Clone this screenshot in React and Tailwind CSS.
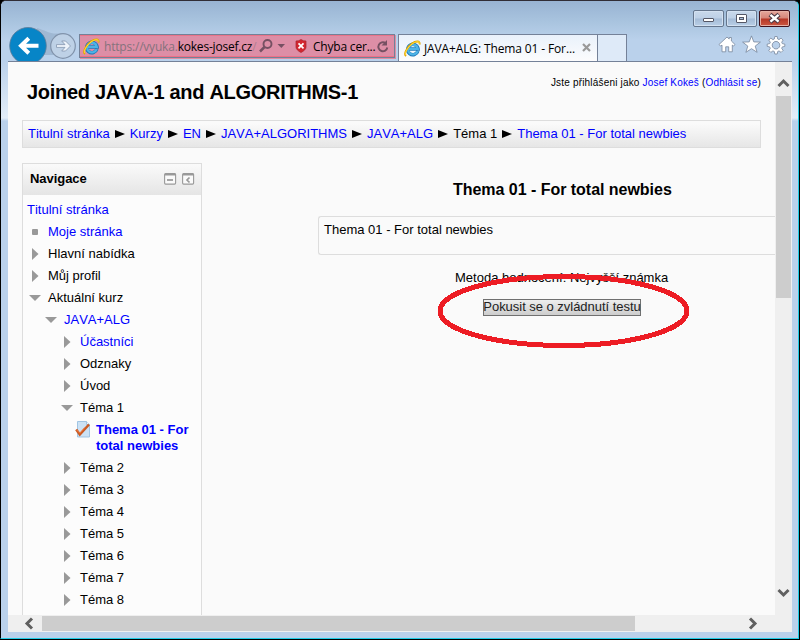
import React from "react";

const UI = "font-['Open_Sans','Noto_Sans',sans-serif]";

function IeLogo() {
  return (
    <svg width="17" height="17" viewBox="0 0 17 17" className="shrink-0">
      <path d="M13.9 11.1A5.2 5.2 0 1 1 14.1 9H5" fill="none" stroke="#1e78b8" strokeWidth="3.5" />
      <path d="M13.6 11.1A4.9 4.9 0 1 1 13.8 8.8H5" fill="none" stroke="#4db3e6" strokeWidth="2.3" />
      <path d="M2.2 15.9C-.8 14.4 2.8 7.5 8 3.6 12 .6 16.3 .6 15.5 4.5" fill="none" stroke="#e5a800" strokeWidth="1.9" />
      <path d="M2 15.2C0 13.5 3.5 7.5 8 4 12 1 15.5 1 15.4 3.5" fill="none" stroke="#ffdc42" strokeWidth="1" />
    </svg>
  );
}

function CaptionButton({ kind }) {
  const close = kind === "close";
  return (
    <div
      className={`flex h-[17px] w-[31px] items-center justify-center rounded-[2px] border ${
        close
          ? "border-[#41101a] bg-[linear-gradient(#e6a79c,#d68478_48%,#b63626_52%,#cb5842)] shadow-[inset_0_0_0_1px_#e6b0a5]"
          : "border-[#65768d] bg-[linear-gradient(#c9d9eb,#bdd0e6_48%,#a4bbd6_52%,#b9cfe7)] shadow-[inset_0_0_0_1px_#d3e1f1]"
      }`}
    >
      <svg width="15" height="13" viewBox="0 0 15 13">
        {kind === "min" && <rect x="2.5" y="6.5" width="10" height="3" rx=".5" fill="#fff" stroke="#545766" />}
        {kind === "max" && (
          <>
            <rect x="2.5" y="2.5" width="10" height="8" rx=".5" fill="#fff" stroke="#545766" />
            <rect x="5.5" y="5.5" width="4" height="2" fill="#a9bfd8" stroke="#545766" />
          </>
        )}
        {close && (
          <>
            <path d="M3 2.500l9 7.500m0-7.500l-9 7.500" stroke="#4d3a45" strokeWidth="4.600" />
            <path d="M3.400 2.900l8.200 6.700m0-6.700l-8.200 6.700" stroke="#fff" strokeWidth="2.500" />
          </>
        )}
      </svg>
    </div>
  );
}

function Chevron({ d, className }) {
  return (
    <svg width="13" height="13" viewBox="0 0 13 13" className={className}>
      <path d={d} fill="none" stroke="#606060" strokeWidth="3" />
    </svg>
  );
}

function AddressBar() {
  return (
    <div className={`${UI} mt-[34px] ml-[3px] flex h-6 w-[316px] shrink-0 items-center border border-[#748198] bg-[#dd8ea6] text-[12px] text-black shadow-[inset_0_1px_#e97489,inset_0_-1px_#ed7086,1px_1px_#dc8ea2]`}>
      <div className="ml-[3px] flex"><IeLogo /></div>
      <div className="mt-px ml-[4px] w-[153px] whitespace-nowrap">
        <span className="tracking-[-0.2px] text-[#85737d]">https://vyuka.</span>
        <span className="tracking-[-0.2px]">kokes-josef.cz</span>
        <span className="text-[#b07f92]">/</span>
      </div>
      <svg width="30" height="16" viewBox="0 0 30 16" className="ml-[2px] shrink-0">
        <circle cx="8.500" cy="6" r="4" fill="none" stroke="#765062" strokeWidth="1.900" />
        <path d="M5.500 9L1 13.500" stroke="#765062" strokeWidth="2.500" />
        <path d="M18.500 6h7.500l-3.700 4z" fill="#765062" />
      </svg>
      <svg width="12" height="14" viewBox="0 0 12 14" className="ml-[6px] shrink-0">
        <path d="M1 2l2.500-.2L6 .5l2.500 1.300L11 2v6c0 2-2 4-5 5.500C3 12 1 10 1 8z" fill="#d32630" stroke="#a8242d" strokeWidth=".7" />
        <path d="M3.500 4.300l5 5m0-5l-5 5" stroke="#fff" strokeWidth="1.700" />
      </svg>
      <span className="mt-px ml-[6px] w-[63px] whitespace-nowrap tracking-[-0.2px]">Chyba cer...</span>
      <svg width="14" height="15" viewBox="0 0 14 15" className="shrink-0">
        <path d="M9.500 4.100A4.500 4.500 0 1 0 11.300 8.500" fill="none" stroke="#765062" strokeWidth="1.900" />
        <path d="M11 1v5.500H5.500z" fill="#765062" />
      </svg>
    </div>
  );
}

function BrowserChrome() {
  return (
    <header className="flex h-[61px] w-full items-start bg-[linear-gradient(#99b4d3_2px,#a9c4df_22px,#bad1eb_40px)]">
      <div className="mt-[27px] ml-[7px] flex h-[34px] w-[68px] shrink-0 overflow-hidden">
        <svg width="68" height="36" viewBox="0 0 68 36" className="shrink-0">
          <path d="M29 1C40 4 42 8 54 6L47 28H28z" fill="#9fb8d3" />
          <circle cx="55" cy="19" r="12.300" fill="#bed1e6" stroke="#8193ab" strokeWidth="1.200" />
          <path d="M48.500 17.600h8.500l-3.300-3.600h3.800l5 5-5 5h-3.800l3.300-3.600h-8.500z" fill="#edf3fa" stroke="#8395ae" strokeWidth=".8" />
          <circle cx="20" cy="18.800" r="18.300" fill="#0785c7" stroke="#5c7b98" strokeWidth=".8" />
          <path d="M30.500 18.800h-17m7.300-7.500l-7.800 7.500 7.800 7.500" fill="none" stroke="#fff" strokeWidth="4" />
        </svg>
      </div>
      <AddressBar />
      <div className={`${UI} mt-[34px] ml-[3px] flex h-[27px] w-[200px] shrink-0 items-center border border-b-0 border-[#748198] bg-[linear-gradient(#e9f1fb,#fcfcfd)] text-[12px]`}>
        <div className="ml-[5px] flex"><IeLogo /></div>
        <span className="mt-px ml-[3px] w-[158px] whitespace-nowrap tracking-[-0.13px]">JAVA+ALG: Thema 01 - For...</span>
        <svg width="10" height="10" viewBox="0 0 10 10"><path d="M1 1l7 7m0-7L1 8" stroke="#999" strokeWidth="2.200" /></svg>
      </div>
      <div className="mt-[34px] h-[27px] w-[29px] shrink-0 border border-b-0 border-l-0 border-[#748198] bg-[#deeaf8]" />
      <div className="mr-[7px] ml-auto flex w-[103px] shrink-0 flex-col items-end">
        <div className="mt-[10px] flex gap-[2px] pr-px">
          <CaptionButton kind="min" />
          <CaptionButton kind="max" />
          <CaptionButton kind="close" />
        </div>
        <svg width="74" height="20" viewBox="0 0 74 20" className="mt-[8px]">
          <g fill="#fff" stroke="#77879c" strokeWidth=".8" strokeLinejoin="round">
            <path d="M2 9.500L10 2l2.200 2V2.500h2.200V6l3.600 3.500-1.500 1.600-1.200-1v6.700h-3.600v-5H8.700v5H5v-6.700L3.600 11.100z" />
            <path d="M34.500 .9l2.300 6 6.600.2-5.200 4 1.900 6.200-5.600-3.600-5.600 3.600 1.900-6.200-5.200-4 6.600-.2z" />
            <path fillRule="evenodd" d="M57.800 1.500h2.400l.5 2.500 1.300.6 2.100-1.500 2 2-1.400 2.100.6 1.400 2.500.5v2.300l-2.500.5-.6 1.400 1.400 2.100-2 2-2.100-1.500-1.300.6-.5 2.500h-2.400l-.5-2.500-1.400-.6-2.100 1.500-2-2 1.500-2.100-.6-1.400-2.500-.5V9.100l2.500-.5.6-1.400-1.500-2.100 2-2L55.900 4.600l1.400-.6zM59 6.400a3.800 3.800 0 1 0 .01 0z" />
          </g>
        </svg>
      </div>
    </header>
  );
}

const crumbs = [
  ["Titulní stránka", true],
  ["Kurzy", true],
  ["EN", true],
  ["JAVA+ALGORITHMS", true],
  ["JAVA+ALG", true],
  ["Téma 1", false],
  ["Thema 01 - For total newbies", true],
];

function Breadcrumb() {
  return (
    <nav className="mt-[17px] ml-[14px] flex h-[28px] w-[739px] items-center border border-[#dddddd] bg-[linear-gradient(#fafafa_10%,#e6e6e6)] pl-[5px] text-[13px] whitespace-nowrap">
      {crumbs.map(([label, link], i) => (
        <React.Fragment key={label}>
          {i > 0 && (
            <svg width="10" height="8" viewBox="0 0 10 8" className="mx-[5px] shrink-0"><path d="M0 0l10 4-10 4z" /></svg>
          )}
          <span className={link ? "text-[#0000ff]" : "text-black"}>{label}</span>
        </React.Fragment>
      ))}
    </nav>
  );
}

function Marker({ type }) {
  return (
    <svg width="12" height="12" viewBox="0 0 12 12" className="mr-[7px] shrink-0">
      {type === "leaf" && <rect x="3" y="3" width="6" height="6" rx="1" fill="#999" />}
      {type === "closed" && <path d="M3 0l6.500 6-6.500 6z" fill="#999" />}
      {type === "open" && <path d="M0 3h12l-6 6z" fill="#999" />}
    </svg>
  );
}

const tree = [
  ["leaf", "pl-[6px]", "Moje stránka", true],
  ["closed", "pl-[6px]", "Hlavní nabídka"],
  ["closed", "pl-[6px]", "Můj profil"],
  ["open", "pl-[6px]", "Aktuální kurz"],
  ["open", "pl-[22px]", "JAVA+ALG", true],
  ["closed", "pl-[38px]", "Účastníci", true],
  ["closed", "pl-[38px]", "Odznaky"],
  ["closed", "pl-[38px]", "Úvod"],
  ["open", "pl-[38px]", "Téma 1"],
];

function TreeRow({ row }) {
  const [type, indent, label, link] = row;
  return (
    <li className={`flex h-[22px] items-center ${indent}`}>
      <Marker type={type} />
      <span className={link ? "text-[#0000ff]" : "text-black"}>{label}</span>
    </li>
  );
}

function NavigationBlock() {
  return (
    <aside className="mt-[15px] ml-[14px] h-[460px] w-[180px] shrink-0 border border-[#dddddd] bg-[#fcfcfc] text-[13px]">
      <div className="flex h-[31px] items-center bg-[linear-gradient(#fafafa,#e5e5e5)] pr-[6px] pl-[7px]">
        <h2 className="mb-px flex-1 font-bold tracking-[-0.05px]">Navigace</h2>
        <svg width="31" height="12" viewBox="0 0 31 12" className="mb-px">
          <g fill="#fafafa" stroke="#999" strokeWidth="1.100">
            <rect x=".6" y=".6" width="11" height="10.500" rx="1" />
            <rect x="18.600" y=".6" width="11" height="10.500" rx="1" />
          </g>
          <path d="M1 1.500h10.500M19 1.500h10.500" stroke="#999" strokeWidth="2" />
          <path d="M3 7h6" stroke="#888" strokeWidth="1.500" />
          <path d="M25.500 4.500L23 7l2.500 2.500" fill="none" stroke="#999" strokeWidth="1.700" />
        </svg>
      </div>
      <div className="mt-[4px] flex h-[22px] items-center pl-[4px] text-[#0000ff]">Titulní stránka</div>
      <ul>
        {tree.map((row) => <TreeRow key={row[2]} row={row} />)}
        <li className="flex h-[38px] pt-[3px] pl-[52px] leading-4 font-bold text-[#0000ff]">
          <svg width="16" height="17" viewBox="0 0 16 17" className="-mt-px mr-[5px] shrink-0">
            <path d="M2.500.5h9l3 3V16h-12z" fill="#cce2f5" stroke="#a1c5e3" />
            <path d="M11.500.5v3h3" fill="#f1f8fd" stroke="#a1c5e3" />
            <path d="M1.200 8.500l3.600 5L14 3.500" fill="none" stroke="#ca5b24" strokeWidth="2.500" />
            <path d="M1.800 9l3 3.200 5-5.700" fill="none" stroke="#f3793d" strokeWidth="1" />
          </svg>
          <span>Thema 01 - For<br />total newbies</span>
        </li>
        {["Téma 2", "Téma 3", "Téma 4", "Téma 5", "Téma 6", "Téma 7", "Téma 8"].map((t) => (
          <TreeRow key={t} row={["closed", "pl-[38px]", t]} />
        ))}
      </ul>
    </aside>
  );
}

function QuizContent() {
  return (
    <main className="relative ml-[116px] flex min-w-0 flex-1 flex-col items-start">
      <h2 className="mt-[32px] ml-[135px] text-[16px] leading-5 font-bold tracking-[-0.03px] whitespace-nowrap">Thema 01 - For total newbies</h2>
      <div className="mt-[16px] h-[39px] w-full rounded-l-[3px] border border-r-0 border-[#dddddd] pt-[5px] pl-[5px] text-[13px] leading-4">
        Thema 01 - For total newbies
      </div>
      <p className="mt-[15px] ml-[137px] text-[13px] leading-4 whitespace-nowrap">Metoda hodnocení: Nejvyšší známka</p>
      <button className="mt-[13px] ml-[165px] flex h-[17px] w-[158px] items-center justify-center border border-[#707070] bg-[linear-gradient(#eeeeee,#cdcdcd)] pb-px text-[13px] leading-[14px] tracking-[-0.03px] whitespace-nowrap text-[#222]">
        Pokusit se o zvládnutí testu
      </button>
      <svg width="260" height="80" viewBox="0 0 260 80" className="pointer-events-none absolute top-[123px] left-[116px]" shapeRendering="crispEdges">
        <ellipse cx="129.500" cy="40" rx="123.500" ry="34.500" fill="none" stroke="#ed1c24" strokeWidth="5" />
      </svg>
    </main>
  );
}

export default function App() {
  return (
    <div className="h-[640px] w-[800px] overflow-hidden bg-black font-['Liberation_Sans',Arial,sans-serif] text-black [font-kerning:none]">
      <div className="flex h-[639px] w-[799px] flex-col overflow-hidden rounded-t-[6px] border border-t-[#302d36] border-r-[#20cce6] border-b-[#20cce6] border-l-black bg-[#bad1eb]">
        <div className="-mt-px shrink-0"><BrowserChrome /></div>
        <div className="flex h-[571px] shrink-0 bg-[linear-gradient(#bad1eb,#e3edf8_57px,#bad1eb_60px)] pl-[7px]">
          <div className="flex h-[571px] w-[784px] flex-col bg-[#fafafa]">
            <div className="flex h-[554px] shrink-0 border-t border-[#748198]">
              <div className="flex w-[767px] flex-col overflow-hidden">
                <div className="flex h-[41px] items-start justify-between pr-[14px] pl-[19px]">
                  <h1 className="mt-[17px] text-[20px] leading-[26px] font-bold tracking-[-0.3px] whitespace-nowrap">Joined JAVA-1 and ALGORITHMS-1</h1>
                  <p className="mt-[13px] text-[10px] leading-[15px] tracking-[0.18px] whitespace-nowrap">
                    Jste přihlášeni jako <span className="text-[#0000ff]">Josef Kokeš</span> (<span className="text-[#0000ff]">Odhlásit se</span>)
                  </p>
                </div>
                <Breadcrumb />
                <div className="flex min-h-0 flex-1">
                  <NavigationBlock />
                  <QuizContent />
                </div>
              </div>
              <div className="flex w-[17px] flex-col items-center bg-[#efefef]">
                <Chevron d="M1.500 10L6.500 5l5 5" className="mt-[14px]" />
                <div className="mt-[7px] h-[202px] w-[15px] bg-[#cdcdcd]" />
                <Chevron d="M1.500 3l5 5 5-5" className="mt-auto mb-[15px]" />
              </div>
            </div>
            <div className="flex h-[17px] items-center bg-[#efefef]">
              <Chevron d="M10 1.500L5 6.500l5 5" className="ml-[14px]" />
              <div className="ml-[7px] h-[15px] w-[593px] bg-[#cdcdcd]" />
              <Chevron d="M3 1.500l5 5-5 5" className="ml-[112px]" />
            </div>
          </div>
        </div>
      </div>
    </div>
  );
}
